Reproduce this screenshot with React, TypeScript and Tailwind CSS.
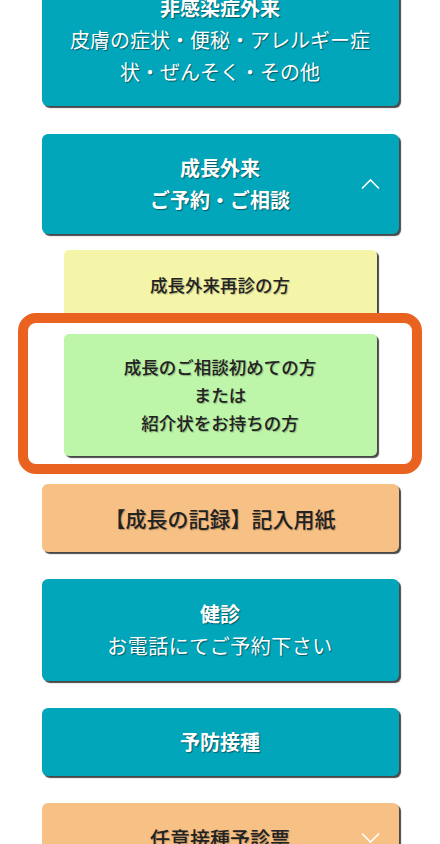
import React from 'react';

const teal = 'bg-[#01a6bb] text-white [text-shadow:1px_1px_1px_rgba(0,0,0,0.45)]';
const card =
  'relative w-[357px] rounded-[6px] shadow-[2px_2px_1px_rgba(40,40,40,0.85)] text-center text-[20px] leading-[32px]';
const sub =
  'relative w-[313px] rounded-[5px] shadow-[2px_2px_1px_rgba(40,40,40,0.85)] text-center text-[17.5px] leading-[28px] font-medium text-[#222] [text-shadow:1px_1px_1px_rgba(0,0,0,0.25)]';

const Chevron = ({ up }: { up?: boolean }) => (
  <svg
    className="absolute right-[19px] top-1/2 -translate-y-1/2"
    width="19"
    height="11"
    viewBox="0 0 19 11"
    fill="none"
  >
    <path
      d={up ? 'M1 10L9.5 1.5L18 10' : 'M1 1L9.5 9.5L18 1'}
      stroke="white"
      strokeWidth="1.6"
    />
  </svg>
);

export default function App() {
  return (
    <div
      className="min-h-[844px] overflow-hidden bg-white"
      style={{ fontFamily: '"Noto Sans CJK JP", "Noto Sans", sans-serif' }}
    >
      <div className="flex flex-col items-center -mt-[27px]">
        {/* 非感染症外来 */}
        <div className={`${card} ${teal} pt-[19px] pb-[18px]`}>
          <p className="font-bold">非感染症外来</p>
          <p>
            皮膚の症状・便秘・アレルギー症
            <br />
            状・ぜんそく・その他
          </p>
        </div>

        {/* 成長外来 (open) */}
        <div className={`${card} ${teal} mt-[28px] py-[18px] font-bold`}>
          <p>成長外来</p>
          <p>ご予約・ご相談</p>
          <Chevron up />
        </div>

        <div className="mt-[16px] flex flex-col gap-[14px]">
          <div className={`${sub} bg-[#f5f5a9] py-[21px]`}>成長外来再診の方</div>
          <div className="relative">
            <div className={`${sub} bg-[#bdf5a9] py-[19px]`}>
              <p>成長のご相談初めての方</p>
              <p>または</p>
              <p>紹介状をお持ちの方</p>
            </div>
            <div className="pointer-events-none absolute -left-[46px] -right-[45px] -top-[21px] -bottom-[18px] rounded-[18px] border-[10px] border-[#e9621f]" />
          </div>
        </div>

        {/* 成長の記録 */}
        <div
          className={`${card} mt-[28px] bg-[#f7c084] py-[18px] font-medium text-[#222] text-[21px] [text-shadow:1px_1px_1px_rgba(0,0,0,0.25)]`}
        >
          【成長の記録】記入用紙
        </div>

        {/* 健診 */}
        <div className={`${card} ${teal} mt-[27px] py-[19px]`}>
          <p className="font-bold">健診</p>
          <p className="tracking-[0.5px]">お電話にてご予約下さい</p>
        </div>

        {/* 予防接種 */}
        <div className={`${card} ${teal} mt-[27px] py-[18px] font-bold`}>予防接種</div>

        {/* 任意接種予診票 */}
        <div
          className={`${card} mt-[27px] bg-[#f7c084] pt-[18px] pb-[18px] font-medium text-[#222] [text-shadow:1px_1px_1px_rgba(0,0,0,0.25)]`}
        >
          <p className="pt-[2px]">任意接種予診票</p>
          <Chevron />
        </div>
      </div>
    </div>
  );
}
